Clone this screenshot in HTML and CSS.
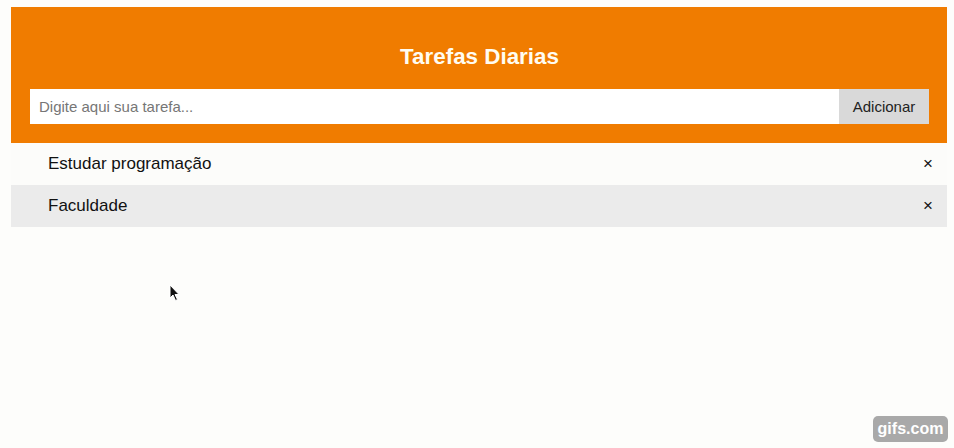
FILE: index.html
```html
<!DOCTYPE html>
<html lang="pt">
<head>
<meta charset="utf-8">
<title>Tarefas Diarias</title>
<link rel="stylesheet" href="styles.css">
</head>
<body>
<div class="header">
  <h2 class="title">Tarefas Diarias</h2>
  <div class="form">
    <input class="task-input" type="text" placeholder="Digite aqui sua tarefa...">
    <span class="add-btn">Adicionar</span>
  </div>
</div>
<ul class="list">
  <li class="item"><span>Estudar programação</span><span class="close">×</span></li>
  <li class="item alt"><span>Faculdade</span><span class="close">×</span></li>
</ul>
<svg class="cursor" width="12" height="18" viewBox="0 0 12 18"><path d="M1 1 L1 14 L4 11 L6.5 16.5 L8.5 15.5 L6 10.5 L10 10.5 Z" fill="#111" stroke="#fff" stroke-width="1"/></svg>
<div class="watermark">gifs.com</div>
</body>
</html>
```
FILE: styles.css
```css
html, body { margin: 0; padding: 0; }
body {
  background: #fdfdfb;
  font-family: "Liberation Sans", Arial, sans-serif;
  padding: 7px 7px 0 11px;
  height: 448px;
  box-sizing: border-box;
  position: relative;
  overflow: hidden;
}
.header {
  background: #f07c00;
  padding: 19px 18px 19px 19px;
  color: #fffcf2;
  text-align: center;
}
.title {
  margin: 18px 0 19px;
  font-size: 22.4px;
  line-height: 26px;
  font-weight: bold;
}
.form { display: flex; height: 35px; }
.task-input {
  flex: 1;
  border: none;
  margin: 0;
  padding: 0 9px;
  font-family: inherit;
  font-size: 15px;
  color: #222;
  background: #fff;
  outline: none;
  height: 35px;
}
.task-input::placeholder { color: #767676; }
.add-btn {
  width: 90px;
  background: #d9d9d9;
  color: #222;
  font-size: 15px;
  display: flex;
  align-items: center;
  justify-content: center;
}
.list { list-style: none; margin: 0; padding: 0; }
.item {
  height: 42px;
  display: flex;
  align-items: center;
  justify-content: space-between;
  padding: 0 14px 0 37px;
  font-size: 17px;
  color: #111;
  background: #fcfcfa;
}
.item.alt { background: #ebebeb; }
.close { font-size: 17px; color: #111; }
.cursor { position: absolute; left: 169px; top: 284px; }
.watermark {
  position: absolute;
  left: 873px;
  top: 416px;
  width: 75px;
  height: 26px;
  border-radius: 5px;
  background: #a9a9a9;
  color: #fff;
  font-family: "Liberation Sans", Arial, sans-serif;
  font-weight: bold;
  font-size: 16px;
  display: flex;
  align-items: center;
  justify-content: center;
}
```
